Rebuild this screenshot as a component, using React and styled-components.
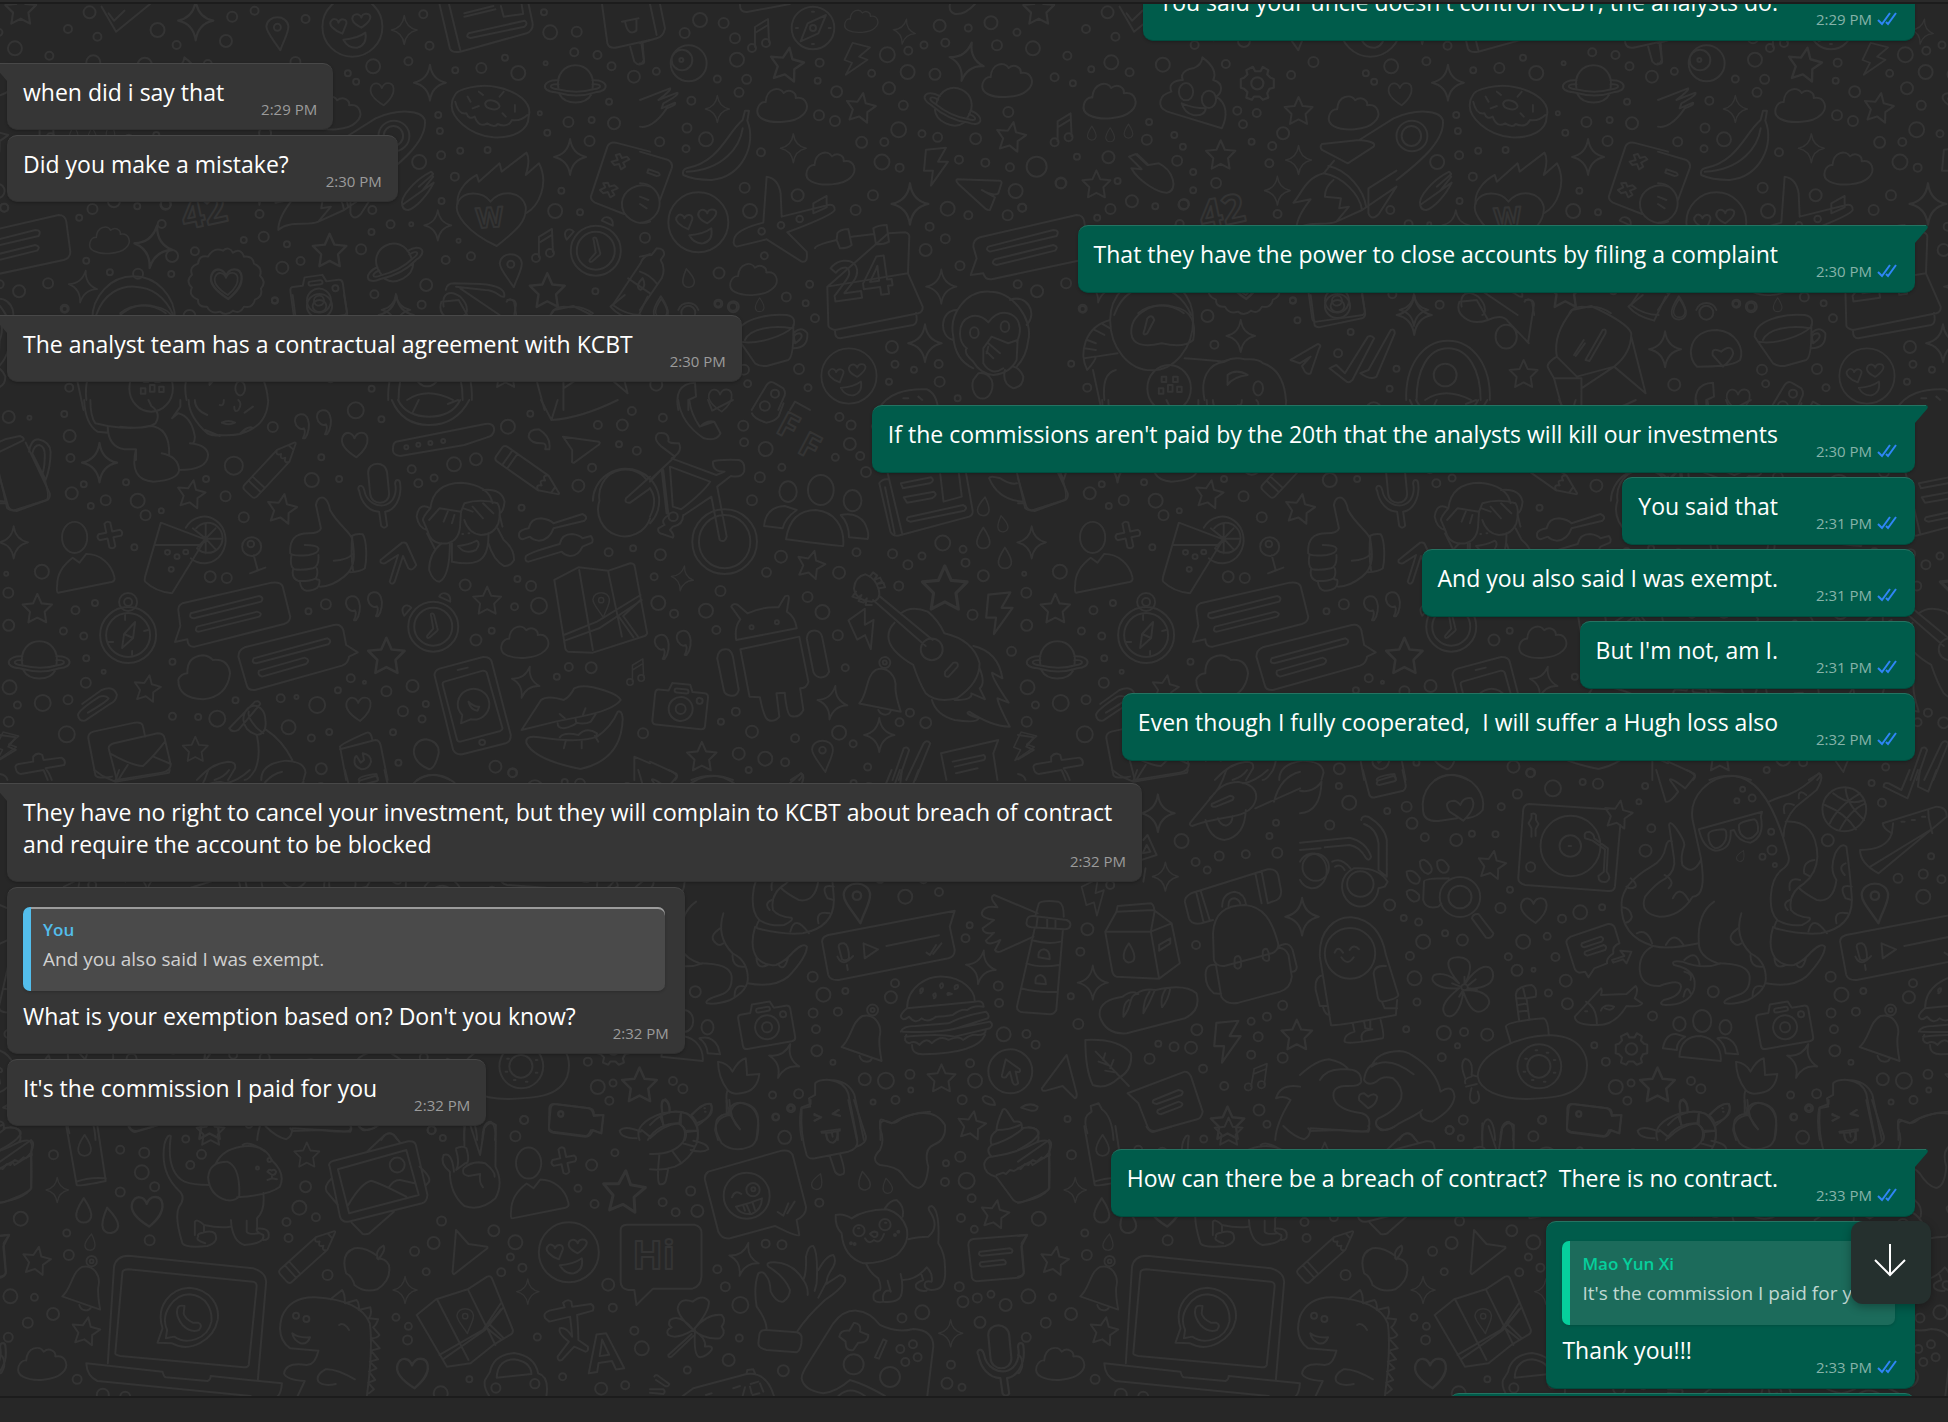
import React, { useLayoutEffect, useRef } from 'react';
import styled, { createGlobalStyle, css } from 'styled-components';

const GlobalStyle = createGlobalStyle`
  * {
    box-sizing: border-box;
  }

  body {
    margin: 0;
    background: #272727;
    color: #ffffff;
    font-family: "Open Sans", "Noto Sans", sans-serif;
  }
`;

const Page = styled.div`
  display: flex;
  flex-direction: column;
  height: 100vh;
`;

const TopEdge = styled.header`
  flex: none;
  height: 4px;
  background: #2a2a2a;
  border-bottom: 2px solid #1c1c1c;
`;

const BottomEdge = styled.footer`
  flex: none;
  height: 26px;
  background: #272727;
  border-top: 2px solid #1c1c1c;
`;

const Chat = styled.main`
  position: relative;
  flex: 1;
  min-height: 0;
  background: #272727;
`;

const Wallpaper = styled.svg`
  position: absolute;
  inset: 0;
  width: 100%;
  height: 100%;
  fill: none;
  stroke: #343434;
  stroke-width: 2;
  stroke-linecap: round;
  stroke-linejoin: round;
`;

const Scroller = styled.div`
  position: relative;
  height: 100%;
  overflow-y: scroll;
  scrollbar-width: none;
`;

const Messages = styled.div`
  display: flex;
  flex-direction: column;
  gap: 22px;
  padding: 0 33px 0 7px;
`;

const Group = styled.div`
  display: flex;
  flex-direction: column;
  align-items: ${props => (props.$mine ? 'flex-end' : 'flex-start')};
  gap: ${props => (props.$mine ? 4 : 5)}px;
  padding-bottom: ${props => (props.$mine ? 0 : 1)}px;
`;

const Bubble = styled.article`
  position: relative;
  display: flex;
  flex-direction: column;
  max-width: 1135px;
  min-width: ${props => props.$minWidth || 0}px;
  min-height: 67px;
  padding: 12px 16px 10px;
  border: 1px solid transparent;
  border-left: 0;
  border-right: 0;
  border-radius: 10px;
  background: #363636;
  border-top-color: #484848;
  border-bottom-color: #303030;
  box-shadow: 0 1px 3px rgba(0, 0, 0, 0.25);

  ${props => props.$mine && css`
    min-height: 68px;
    padding-bottom: 11px;
    background: #005c4b;
    border-top-color: #257362;
    border-bottom-color: #004c3e;
  `}

  ${props => props.$tail && (props.$mine
    ? css`border-top-right-radius: 0;`
    : css`border-top-left-radius: 0;`)}
`;

const Tail = styled.svg`
  position: absolute;
  top: -1px;
  width: 13px;
  height: 18px;
  fill: #363636;
  stroke: #484848;

  ${props => (props.$mine ? css`
    left: 100%;
    fill: #005c4b;
    stroke: #257362;
  ` : css`
    right: 100%;
    transform: scaleX(-1);
  `)}
`;

const Body = styled.div`
  display: grid;

  > * {
    grid-area: 1 / 1;
  }
`;

/* the trailing block keeps the last line clear of the time stamp */
const Text = styled.p`
  margin: 0 0 11px;
  font-size: 23px;
  line-height: 32px;
  white-space: pre-wrap;

  &::after {
    content: '';
    display: inline-block;
    width: ${props => (props.$mine ? 121 : 93)}px;
  }
`;

const Meta = styled.div`
  display: flex;
  align-items: center;
  align-self: end;
  justify-self: end;
  gap: 5px;
  padding-right: ${props => (props.$mine ? 2 : 0)}px;
  color: ${props => (props.$mine ? '#86b3a9' : '#9b9b9b')};
  font-size: 15px;
  line-height: 20px;
`;

const Ticks = styled.svg`
  width: 20px;
  height: 14px;
  fill: none;
  stroke: #2f86f6;
  stroke-width: 2;
`;

const Quote = styled.blockquote`
  height: 84px;
  margin: 7px 4px 9px 0;
  padding: 11px 20px 0 12px;
  border-left: 8px solid #53bdeb;
  border-radius: 7px;
  background: #4a4a4a;
  box-shadow: inset 0 2px 0 #9c9c9c, 0 1px 3px rgba(0, 0, 0, 0.2);

  ${props => props.$mine && css`
    border-left-color: #06cf9c;
    background: #1c6b5b;
    box-shadow: 0 1px 3px rgba(0, 0, 0, 0.15);
  `}
`;

const QuoteName = styled.div`
  color: ${props => (props.$mine ? '#06cf9c' : '#53bdeb')};
  font-size: 17px;
  font-weight: 600;
  line-height: 24px;
`;

const QuoteText = styled.div`
  margin-top: 3px;
  color: ${props => (props.$mine ? '#c0d8d2' : '#d0d0d0')};
  font-size: 19px;
  line-height: 28px;
`;

const JumpButton = styled.button`
  position: absolute;
  right: 17px;
  bottom: 92px;
  display: flex;
  align-items: center;
  justify-content: center;
  width: 80px;
  height: 83px;
  padding: 0 2px 5px 0;
  border: 0;
  border-radius: 12px;
  background: #25302e;
  box-shadow: 0 3px 10px rgba(0, 0, 0, 0.3);
`;

const Arrow = styled.svg`
  width: 32px;
  height: 34px;
  fill: none;
  stroke: #ffffff;
  stroke-width: 2;
`;

const groups = [
  { mine: true, messages: [
    { text: "You said your uncle doesn't control KCBT, the analysts do.", time: '2:29 PM', follows: true }
  ] },
  { messages: [
    { text: 'when did i say that', time: '2:29 PM' },
    { text: 'Did you make a mistake?', time: '2:30 PM' }
  ] },
  { mine: true, messages: [
    { text: 'That they have the power to close accounts by filing a complaint', time: '2:30 PM' }
  ] },
  { messages: [
    { text: 'The analyst team has a contractual agreement with KCBT', time: '2:30 PM' }
  ] },
  { mine: true, messages: [
    { text: "If the commissions aren't paid by the 20th that the analysts will kill our investments", time: '2:30 PM' },
    { text: 'You said that', time: '2:31 PM' },
    { text: 'And you also said I was exempt.', time: '2:31 PM' },
    { text: "But I'm not, am I.", time: '2:31 PM' },
    { text: 'Even though I fully cooperated,  I will suffer a Hugh loss also', time: '2:32 PM' }
  ] },
  { messages: [
    { text: 'They have no right to cancel your investment, but they will complain to KCBT about breach of contract and require the account to be blocked', time: '2:32 PM' },
    {
      quote: { name: 'You', text: 'And you also said I was exempt.' },
      text: "What is your exemption based on? Don't you know?",
      time: '2:32 PM'
    },
    { text: "It's the commission I paid for you", time: '2:32 PM' }
  ] },
  { mine: true, messages: [
    { text: 'How can there be a breach of contract?  There is no contract.', time: '2:33 PM' },
    {
      quote: { name: 'Mao Yun Xi', text: "It's the commission I paid for you" },
      text: 'Thank you!!!',
      time: '2:33 PM'
    },
    { minWidth: 466 }
  ] }
];

/* Small doodles that come back all over the wallpaper, drawn round 0,0. */
const stamps = {
  star: <path d="M0-14L4-5 14-4 7 3 8.5 13 0 8.5-8.5 13-7 3-14-4-4-5Z" />,
  sparkle: <path d="M0-18Q2-3 16 0Q2 3 0 18Q-2 3-16 0Q-2-3 0-18Z" />,
  cloud: <path d="M-20 13C-30 8-24-5-17-4C-16-18-3-20 1-13C7-18 14-13 13-8C24-10 28 2 20 9C12 17-10 18-20 13Z" />,
  heart: <path d="M2 13C-6 8-15 1-12-7C-9-14-2-12 0-6C3-14 12-13 13-6C14 2 8 8 2 13Z" />,
  drop: <path d="M0-12C6-3 8 2 7 6C5 13-5 13-7 6C-8 2-6-3 0-12Z" />,
  pin: <g><path d="M3 18C-5 6-11 0-11-6C-10-18 10-18 11-6C11 2 6 8 3 18Z" /><circle cy="-5" r="3.5" /></g>,
  note: <g><path d="M-5 12V-8L8-16L9 7M-5-2L8-10" /><circle cx="-8" cy="13" r="4" /><circle cx="6" cy="8" r="4" /></g>,
  bolt: <path d="M-9-17L11-19L3-5H13L-4 19L-2 4H-11Z" />,
  quotes: <g>
    <path d="M-11 13C-7 8-6-1-8-6C-11-14-21-12-21-4C-20 2-15 5-12 3C-10 6-11 9-13 13Z" />
    <path d="M11 9C15 4 16-5 14-10C11-18 1-16 1-8C2-2 7 1 10-1C12 2 11 5 9 9Z" />
  </g>,
  planet: <g>
    <path d="M-17 6C-20-10-10-18 0-18S20-10 17 6" />
    <path d="M-17-3C-33-4-36 8-20 9C-6 13 8 13 20 9C35 8 33-4 17-3M-17 1C-26 0-28 5-18 6C-6 9 8 9 18 6C28 5 26 0 17 1M-16 11C-10 22 10 22 16 11" />
  </g>,
  camera: <g>
    <path d="M-24-13H-14L-11-21H7L10-14H22Q26-14 26-10V18Q26 22 22 22H-23Q-27 22-27 18V-9Q-27-13-24-13ZM-6-16H4Q6-16 6-13.500Q6-12 4-12H-6Q-8-12-8-14Q-8-16-6-16Z" />
    <circle cy="4" r="12" /><circle cy="4" r="5" /><circle cx="18" cy="-6" r="3" />
  </g>,
  bell: <g>
    <path d="M-24 12C-14 4-14-14-3-19C9-22 17-10 14 2C13 10 15 20 16 26ZM-6 21C-4 28 4 28 6 24" />
    <circle cx="7" cy="-25" r="5.500" /><circle cx="7" cy="-25" r="2" />
  </g>,
  pencil: <path d="M-9 32V-18L-1-36Q0-38 1-36L9-18V32Q9 36 5 36H-5Q-9 36-9 32ZM-9 20H9M-9 26H9M-9-18Q-6-12-3-18Q0-12 3-18Q6-12 9-18M-3-30H3" />,
  clock: <g>
    <circle r="25" /><circle r="19" />
    <path d="M-2-13Q-3-13-2-10L0 2L-6 9Q-7 12-4 11L4 4Q5 3 4 1L1-11Q0-14-2-13Z" />
    <path d="M-29-11C-34-20-27-24-22-19ZM6-30C8-36 18-34 17-25Z" />
  </g>,
  emoji: <g>
    <circle r="30" />
    <path d="M-10 7C-18 4-25-2-21-6C-18-10-14-6-14-4C-12-9-5-8-6-3ZM9 1C1-3-2-7 1-11C4-14 8-12 9-9C10-14 17-14 18-10C18-5 13-2 9 1ZM-9 13Q5 12 13 6Q15 18 5 21Q-4 22-9 13Z" />
  </g>,
  person: <g>
    <ellipse cy="-25" rx="13" ry="16" />
    <path d="M-17 32Q-19 32-18 24C-18 10-10 2-2-4L5 1L12-8C26-8 38 2 41 16Q42 20 38 21Z" />
  </g>,
  plus: <path d="M-3-12Q0-15 3-12V-3H11Q14 0 11 3H3V12Q0 15-3 12V3H-11Q-14 0-11-3H-3Z" />,
  gear: <g>
    <circle r="5.500" />
    <path d="M-4-15L-2-11H3L5-15L10-12L9-8L12-5L15-4V4L11 5L9 9L10 13L5 15L2 12H-3L-5 15L-10 13L-9 8L-12 5L-15 4V-4L-12-5L-9-8L-10-12Z" />
  </g>,
  compass: <g>
    <circle r="28" /><circle r="22" /><circle cy="-33" r="9" /><circle cy="-33" r="4" />
    <path d="M-6 13L-4 -1L7-13L5 3ZM-4-1L5 3M-3-20V-15M4 16V20M-20 7H-15M16-4L20-5" />
  </g>,
  burst: <path d="M-3-31Q3-36 7-29Q15-34 18-25Q27-26 28-18Q37-14 34-6Q41 0 35 7Q37 15 29 18Q27 27 18 25Q14 33 7 29Q0 35-6 30Q-15 33-19 25Q-28 26-28 18Q-38 14-34 6Q-41-1-34-7Q-37-15-28-18Q-27-27-18-25Q-12-35-3-31Z" />,
  mic: <path d="M-10-24C-10-36 8-36 9-24L11-3C11 9-7 9-8-3ZM-19-6C-22-10-16-14-14-7C-12 6 0 11 8 8C16 5 19-5 17-13C17-18 22-18 22-13C24 2 16 14 7 15L9 29Q6 33 3 29L1 15C-9 15-17 6-19-6Z" />
};

/*
 * The wallpaper is one tile, repeated sideways. Each patch of it has its own
 * origin and unit; dots are "x,y,radius", items are [stamp, x, y, size, turn].
 */
const TILE_WIDTH = 1018;

const patches = [
  {
    origin: [0, -4],
    unit: [0.4146, 0.3333],
    dots: '216,37,6 164,87,4 380,90,7 560,50,5 614,32,4 235,110,4 36,145,7 119,167,4 426,135,4 545,123,6 737,57,4 1021,43,4 1036,137,4 985,184,4 900,199,7 839,220,3 859,245,3 1098,211,3 1161,204,5 1218,173,3 1250,219,7 1312,37,3 1327,97,7 1391,95,5 1385,157,4 1441,165,4 1475,199,4 1316,190,2 1529,230,6 1469,305,3 1302,340,2 1371,366,5 1427,360,3 1320,398,3 1481,370,6 1057,345,3 1061,393,3 1110,452,3 1176,450,3 1064,466,4 1011,486,7 1097,530,4 1422,423,5 1354,572,3 1339,633,7 1399,637,3 1065,603,3 626,642,4 898,630,4 942,673,4 992,673,2 896,696,3 1106,722,2 1136,769,4 1075,780,4 636,710,5 588,720,3 692,733,3 725,783,4 871,748,5 681,803,6 470,754,4 390,672,4 223,627,5 191,653,3 331,619,3 399,614,5 10,623,4 208,782,3 265,817,3 333,821,5 415,768,6 413,822,3 116,850,5 46,874,6 156,926,4 663,902,3 903,883,4 1028,855,6 1017,914,4 1436,874,3',
    items: [
      ['star', 50, 28, 1.1], ['star', 795, 752, 1.2], ['star', 1320, 872, 1.25],
      ['sparkle', 472, 62, 1.1], ['sparkle', 975, 90, 0.8], ['sparkle', 1037, 248, 1], ['sparkle', 1375, 471, 1],
      ['sparkle', 370, 740, 1.2, 10], ['sparkle', 1056, 676, 0.85], ['sparkle', 200, 860, 0.9, 10], ['sparkle', 955, 930, 0.9],
      ['pin', 669, 97, 1], ['pin', 1232, 808, 1], ['heart', 921, 281, 0.9], ['planet', 1388, 250, 1], ['planet', 950, 785, 1, -28],
      ['emoji', 850, 80, 1], ['burst', 545, 845, 1], ['heart', 545, 850, 1.2], ['heart', 545, 850, 0.9],
      ['cloud', 265, 722, 0.8], ['camera', 768, 890, 1, -8], ['note', 1312, 735, 1], ['clock', 1437, 752, 1]
    ],
    lines: [
      'M245 20L280 95L362 12M262 40L275 62L300 32',
      'M1060 12L1085 145Q1090 160 1110 155L1270 100Q1290 90 1283 60L1275 12M1083 12L1110 150M1120 40L1190 18M1120 50L1195 28M1208 18L1215 50L1262 42L1258 12M1130 100L1265 62Q1275 70 1265 80L1135 114Q1122 112 1130 100Z',
      'M1452 12L1465 130Q1470 148 1490 142L1568 120M1520 140L1530 185Q1545 205 1553 180L1550 130M1500 65L1540 55M1508 68Q1515 110 1535 92V58',
      'M1095 290C1100 265 1160 250 1200 262C1250 275 1285 310 1275 350C1275 390 1240 415 1190 412C1130 405 1085 350 1090 310Q1090 300 1095 290ZM1098 305Q1105 345 1125 340Q1130 360 1145 350Q1155 385 1175 370Q1195 385 1200 372Q1225 385 1235 360Q1255 365 1272 345',
      'M1170 310C1175 295 1200 300 1205 318C1205 335 1170 330 1170 310ZM1128 290L1135 305M1155 275L1165 285M1215 275L1205 290M1242 315V335M1140 325L1155 318M1220 350L1212 340',
      'M1104 612C1100 580 1120 545 1150 525L1155 545L1205 490L1210 515L1270 458C1280 480 1272 510 1268 525L1300 490C1325 550 1300 620 1268 640',
      'M1198 738C1130 700 1090 640 1105 605C1120 570 1165 575 1183 605C1210 565 1260 575 1268 620C1272 670 1235 700 1198 738Z',
      'M970 615C965 590 1000 540 1040 515L1045 522L1010 560M1045 530L1020 570M1046 548C1030 590 1000 625 985 630Q972 630 970 615Z',
      'M1568 455L1485 428Q1470 425 1465 440L1425 590Q1425 600 1435 608L1505 642M1500 608A50 58 0 0 1 1568 560M1500 608A50 58 0 0 0 1568 665M1485 465L1490 480L1475 485L1482 495L1493 492L1498 508L1508 500L1503 488L1518 478L1512 470L1500 474L1495 462ZM1455 550L1460 562L1447 570L1455 580L1466 576L1472 592L1482 585L1476 572L1490 565L1482 556L1470 560L1466 548Z',
      'M232 945C250 880 290 858 325 860C370 862 400 895 418 945M290 940C320 908 370 910 400 940',
      'M1070 920C1065 880 1085 868 1110 890C1135 920 1125 945 1120 945M1075 870Q1078 850 1095 850L1160 852C1200 855 1220 870 1216 890C1205 895 1200 870 1170 870L1100 860M1222 905Q1230 890 1240 905L1245 945M1110 865L1205 945',
      'M1568 762Q1550 770 1545 790L1478 915Q1510 945 1545 945M1515 835L1568 880M1550 835Q1530 860 1545 870Q1560 860 1550 835M1330 940Q1340 915 1375 922Q1400 915 1430 940'
    ],
    words: [['42', 445, 690, 40, -12], ['W', 1150, 685, 28, -4]]
  },
  {
    origin: [32, -4],
    unit: [0.5727, 0.3333],
    dots: '8,232,4 40,250,3 72,208,3 107,187,7 139,217,4 197,194,7 307,192,4 460,186,5 421,225,4 173,366,3 169,419,5 217,405,3 232,440,3 327,332,4 361,339,4 337,373,4 407,400,6 352,425,3 388,438,4 383,490,4 47,470,3 102,472,6 222,482,5 250,516,3 250,571,3 290,549,5 19,550,5 118,543,3 143,604,6 234,612,5 57,927,3 275,948,6 424,901,3 432,961,3 287,1034,4 503,1060,4 525,996,3 605,1106,3 593,1166,3 37,1091,3 65,1163,4 1090,1154,6 1146,938,7 1198,911,3 1224,920,4',
    items: [
      ['cloud', 105, 305, 1.05], ['cloud', 531, 340, 1], ['gear', 362, 250, 1.1], ['star', 434, 333, 1], ['star', 298, 465, 1.05], ['star', 81, 553, 1],
      ['star', 827, 1122, 1], ['sparkle', 434, 480, 0.8], ['sparkle', 397, 572, 0.8], ['sparkle', 636, 945, 1.1], ['sparkle', 333, 1008, 0.9],
      ['sparkle', 1074, 1048, 1], ['drop', 73, 400, 0.6], ['drop', 105, 405, 0.6], ['drop', 137, 394, 0.6], ['drop', 1098, 925, 1],
      ['note', 22, 388, 1]
    ],
    lines: [
      'M300 385L205 335C185 320 190 285 212 275C205 250 220 240 232 240C225 215 245 205 250 205Q265 195 266 172C280 190 292 215 285 240C305 250 300 280 290 290C310 310 310 350 300 385ZM225 275A12 25 0 1 0 250 275A12 25 0 1 0 225 275M265 298A12 25 0 1 0 290 298A12 25 0 1 0 265 298M230 310Q250 325 272 325Q270 350 250 345Q235 340 230 310',
      'M540 420L600 355C640 325 680 330 686 360C690 420 650 480 605 540M540 420L475 432Q470 440 475 450L520 490L565 440Q572 425 540 420M605 408A27 46 0 1 0 659 408A27 46 0 1 0 605 408M614 408A17 30 0 1 0 648 408A17 30 0 1 0 614 408',
      'M496 482L478 520C510 530 540 580 545 630L605 560L575 640Q562 665 556 640V565L605 512M486 498C520 510 548 570 552 620',
      'M478 520C445 535 440 580 425 608L455 598C440 630 430 660 430 690C450 660 480 680 500 665L522 620L505 625L508 595L480 590Q480 560 495 540M500 665L545 630',
      'M138 470L150 462L170 495L150 463M138 470L160 508L142 505C155 545 190 580 205 578C225 570 215 510 190 490L172 495L152 462',
      'M105 960A72 130 0 0 1 250 960A72 150 0 0 1 105 960ZM142 1000C140 940 180 905 215 920C250 930 255 975 250 1020Q235 1045 195 1030Q145 1050 142 1000ZM165 990Q160 1010 170 1000L182 960Q178 940 170 955Z',
      'M105 960C60 980 50 1060 65 1110Q80 1080 80 1070L118 1060M90 970L105 985M78 990L95 1005M65 1020L80 1030M60 1045L80 1050M60 1075L78 1070M235 1075C290 1080 300 1090 310 1080M75 1110L90 1230M115 1110Q90 1120 95 1200M170 1165A38 70 0 1 0 246 1165A38 70 0 1 0 170 1165',
      'M195 1130h8v16h-8zM215 1130h8v16h-8zM190 1165h8v16h-8zM222 1160h8v16h-8zM206 1155h8v20h-8z',
      'M270 1200C262 1140 275 1090 305 1085Q320 1070 340 1078Q365 1075 372 1090Q408 1110 412 1200M310 1125Q325 1105 345 1125Q320 1130 310 1155ZM355 1165A8 20 0 1 0 372 1165A8 20 0 1 0 355 1165',
      'M622 1200C620 1100 650 1022 695 1022S770 1100 768 1200M640 1200C640 1110 660 1045 695 1045S752 1110 752 1200M670 1125A20 34 0 1 0 710 1125A20 34 0 1 0 670 1125M655 1200Q690 1160 735 1200',
      'M420 1080L468 1032Q475 1035 470 1045L455 1120Q450 1125 445 1115L440 1098L455 1070L436 1090ZM488 1105L500 1095L515 1120L555 1010Q562 1005 566 1015L528 1140Q522 1150 518 1145ZM542 1120L556 1110L595 990Q602 985 602 1000L570 1130Q560 1142 542 1120',
      'M715 905Q708 935 725 955Q740 975 765 960L745 900ZM765 960Q790 940 800 965L836 1030M778 1010A18 35 0 1 0 815 1010A18 35 0 1 0 778 1010M830 900Q845 895 845 915L835 1025',
      'M912 930L945 918Q1010 970 1015 1000Q1015 1060 985 1100L920 1130L885 1070C880 1020 890 980 912 930ZM885 1070Q865 1090 870 1105L880 1135H928V1230M880 1135L895 1230M1015 1010L1040 1180L985 1100L928 1165M935 1080L965 990Q972 985 970 1000L942 1083ZM915 1065L932 1020M918 1068L934 1030',
      'M1130 1100C1110 1070 1115 990 1165 990C1200 995 1212 1050 1205 1080C1190 1100 1160 1100 1130 1100ZM1175 1100L1157 1065Q1155 1040 1172 1055Q1190 1030 1193 1060Q1190 1080 1175 1100ZM1035 885L1010 920Q1025 950 1055 962L1075 890',
      'M455 885L462 975Q465 985 475 980L545 955Q552 950 550 935L545 885M480 918A22 36 0 1 0 524 918A22 36 0 1 0 480 918M490 918A12 18 0 1 0 514 918A12 18 0 1 0 490 918'
    ],
    words: []
  },
  {
    origin: [640, -4],
    unit: [0.3333, 0.3333],
    dots: '180,60,7 251,69,5 134,99,5 285,115,5 291,179,7 49,214,3.5 232,237,3.5 320,238,4.5 297,277,4.5 154,302,4 141,384,4.5 59,425,4.5 198,418,7 138,446,3.5 363,457,4 539,188,4 533,242,3 590,275,5.5 537,346,5 585,363,5 742,164,7.5 695,220,3.5 747,265,6 790,316,4.5 803,216,7 805,152,4 852,135,3.5 885,223,5.5 899,77,6 916,128,4 985,84,3.5 1053,68,6.5 1071,136,5 1131,97,3.5 1105,336,5 1007,416,5.5 893,412,4.5 846,401,3.5 776,389,7.5 733,426,4 665,427,5.5 726,486,7.5 779,503,4 957,479,4 1036,488,4 1110,502,4 1190,500,10 1263,549,5.5 1127,573,7 1147,623,4 1103,646,5 985,646,4 923,626,7 869,680,4 916,716,4.5 857,750,6 960,797,4.5 699,586,5 647,630,5 473,586,6 314,563,5 330,633,7 373,767,3.5 237,819,5.5 439,891,4.5 509,853,3.5 497,910,3 525,955,4 280,920,5.5 235,911,4 15,713,5 1133,853,4 756,1041,6 765,1093,3.5 822,1109,3 896,1092,4 899,1145,5 747,1145,3 477,1107,5 504,1163,3.5 312,1109,5 323,1151,3.5 953,1195,3',
    items: [
      ['note', 360, 105, 1], ['star', 440, 193, 1.2, 10], ['star', 662, 323, 1.05, 10], ['star', 1113, 410, 1.05, 10], ['sparkle', 793, 95, 0.7, 10],
      ['sparkle', 980, 185, 1.1, 15], ['sparkle', 232, 327, 0.75], ['sparkle', 460, 445, 0.8], ['sparkle', 810, 612, 1.15], ['sparkle', 904, 860, 0.95],
      ['sparkle', 855, 1030, 1.05], ['cloud', 428, 318, 1], ['cloud', 665, 65, 0.67], ['cloud', 573, 507, 0.97], ['cloud', 342, 840, 0.94],
      ['cloud', 1103, 243, 1], ['bolt', 645, 180, 0.9, 20], ['bolt', 885, 500, 1], ['planet', 942, 318, 1, 25], ['emoji', 175, 667, 1],
      ['emoji', 627, 1128, 0.92], ['heart', 240, 1200, 0.9], ['drop', 144, 835, 0.8, -10], ['drop', 359, 915, 0.6], ['drop', 64, 925, 0.8]
    ],
    lines: [
      'M30 12L50 105M60 12L75 85Q70 110 50 115L0 130M0 190Q15 195 12 180L5 135',
      'M455 84A64 64 0 1 0 583 84A64 64 0 1 0 455 84M558 45L535 100L482 124L503 70ZM510 84A9 9 0 1 0 528 84A9 9 0 1 0 510 84M516 35h6M516 132h6M468 84h6M566 84h6',
      'M92 190A54 54 0 1 0 200 190A54 54 0 1 0 92 190M95 180A31 31 0 1 0 157 180A31 31 0 1 0 95 180M118 180A6 6 0 1 0 130 180A6 6 0 1 0 118 180',
      'M300 12Q298 40 325 35L450 12M930 12Q925 35 945 42Q975 45 1005 12M0 300L90 265Q95 270 55 300L112 278Q118 285 70 310L65 325L105 308Q110 315 80 325C50 370 20 385 0 380',
      'M308 360L315 332H327L322 362C350 430 310 530 215 540Q160 540 130 525Q125 510 140 505C240 485 260 400 308 360ZM308 385C300 440 250 510 140 515',
      'M380 530Q415 535 422 580L425 650L565 615Q585 612 584 630Q580 645 442 697L500 755Q505 790 485 785L380 718L290 740Q275 735 285 710Q300 685 370 668ZM520 640V610L560 588V622ZM355 694A10 10 0 1 0 375 694A10 10 0 1 0 355 694M413 676A10 10 0 1 0 433 676A10 10 0 1 0 413 676M469 657A10 10 0 1 0 489 657A10 10 0 1 0 469 657',
      'M525 745Q525 735 590 720L592 700Q600 688 625 687L635 735Q625 745 600 745L590 720M635 710L703 702L700 685Q715 675 740 675L747 725Q735 733 708 733L703 702M745 700L795 697Q808 700 808 710L804 820L848 920Q850 935 835 940L585 990Q565 985 565 975L562 860ZM562 860L804 820M585 992Q585 1015 600 1015L820 975Q835 970 828 940',
      'M290 1010C290 960 380 940 440 945Q470 950 460 980C430 1010 350 1035 300 1025ZM300 1025L345 1090Q360 1100 380 1098L445 1080Q462 1070 460 975M315 1020C330 985 400 975 455 985M460 1000Q485 975 502 1000Q505 1045 460 1045M465 1025Q455 1000 480 1000Q495 1010 465 1030Z',
      'M940 1010C925 940 980 870 1050 875C1120 875 1180 960 1165 1020Q1160 1070 1130 1100M940 1010Q945 1080 1000 1105M950 930C900 930 895 1010 940 1020M1110 900C1160 880 1195 940 1160 975M1045 967C1010 930 960 950 960 1000Q960 1030 980 1045M1045 967C1080 920 1135 935 1140 985Q1140 1010 1130 1025M990 998A13 16 0 1 0 1016 998A13 16 0 1 0 990 998M1082 980A13 16 0 1 0 1108 980A13 16 0 1 0 1082 980',
      'M980 1045Q970 1060 1000 1085Q1020 1120 1060 1125Q1110 1120 1130 1080L1133 1020L1105 1030L1055 1010L1030 1045V1090Q1055 1130 1090 1105M1045 1030L1080 1060M1040 1055L1060 1075M1040 1060L1045 1040M1000 1140A30 40 0 1 0 1055 1140Q1040 1115 1015 1120ZM1095 1110Q1085 1150 1120 1165Q1150 1160 1150 1130Q1140 1105 1120 1100',
      'M952 538L1080 542Q1088 545 1083 555L1075 580Q1060 590 1025 570L1065 592L1050 630Q1045 632 1035 625L955 552Q945 540 952 538Z',
      'M1000 740Q1000 718 1020 712L1310 645Q1330 645 1333 665L1345 755Q1345 775 1325 780L1055 838Q1035 840 1030 820L992 825L1010 775ZM1045 740L1240 690Q1260 690 1250 708L1050 755Q1035 750 1045 740ZM1065 778L1240 735Q1258 740 1245 752L1070 795Q1050 790 1065 778Z',
      'M0 455L85 480Q100 490 95 505L60 600M25 508L55 518Q65 528 50 528L22 518ZM0 550A58 58 0 0 1 0 668M0 590L25 600M0 612L20 625M0 770Q20 765 35 765L50 745Q75 745 72 765L62 780Q78 805 65 835L0 930M0 815Q30 825 50 850',
      'M115 930A32 32 0 0 1 175 930M115 1230C105 1180 120 1150 165 1148L168 1190L145 1200V1230M335 1230L380 1155Q390 1140 405 1150L430 1165Q440 1180 430 1195L415 1230M393 1181A12 12 0 1 0 417 1181A12 12 0 1 0 393 1181M450 1230L465 1205L510 1230M715 1230C740 1180 800 1165 860 1168Q890 1180 895 1230M790 1195h15M835 1190l12 10'
    ],
    words: [['24', 580, 905, 54, -8]]
  },
  {
    origin: [0, 396],
    unit: [0.4146, 0.3333],
    dots: '21,51,6 71,53,2 155,42,3 168,108,6 170,174,4 173,280,6 202,253,3 219,318,3 255,301,5 304,247,3 332,302,7 351,346,5 389,332,2.5 497,237,3 544,289,5 564,197,9 658,81,5 752,240,7 775,172,3 818,237,3 588,352,5 324,442,3 101,515,7 15,521,2 20,578,5 21,676,5.5 182,631,4 229,609,3 153,693,3.5 202,708,3.5 208,775,3 250,815,2 207,848,5 23,862,7 42,915,3.5 103,909,8 164,899,4.5 21,965,5 161,1003,8 416,785,3 416,949,3.5 478,951,3 507,530,5.5 547,534,5 568,901,3 524,956,8 677,895,4 715,891,2 765,915,8 696,982,7 794,996,3 751,1014,3.5 775,1106,5.5 744,634,3 786,613,5 846,835,4 879,847,1.5 815,871,3 932,874,5 995,858,6 972,934,5 1027,912,3 1018,957,3.5 948,997,3 961,1088,3 858,31,8 920,58,3 1225,80,7 1279,41,3 1095,193,7 1148,178,6 993,208,4 1009,250,4 1047,234,3.5 1258,323,3 1395,257,6 1428,203,4 1442,75,4 1501,75,5.5 1524,33,4 1493,133,3 1536,152,4 1468,457,4 1527,445,3 1122,555,5.5 1248,537,3 1281,558,5 1300,617,8 1241,620,3.5 1186,692,3 1148,720,5.5 1343,830,3 1372,801,4 1426,803,5.5 1195,1100,6 1236,1119,4 1551,1000,5 980,142,2 1009,134,2 1038,129,2 1069,123,2',
    items: [
      ['star', 90, 626, 1.05], ['star', 461, 282, 1, 10], ['star', 680, 326, 1.05, 10], ['star', 355, 865, 0.95, 10], ['star', 932, 768, 1.3],
      ['star', 1175, 602, 1], ['star', 471, 1048, 0.9], ['sparkle', 240, 188, 1.1], ['sparkle', 33, 427, 0.9], ['sparkle', 1268, 847, 0.9, 15],
      ['heart', 855, 133, 1], ['heart', 864, 926, 0.95], ['quotes', 762, 76, 1], ['quotes', 885, 622, 1], ['planet', 95, 778, 1],
      ['pencil', 655, 205, 0.95, 43], ['pencil', 1275, 218, 1, 125], ['cloud', 1267, 728, 0.95], ['note', 1535, 815, 0.8], ['pin', 1450, 612, 0.75],
      ['compass', 309, 705, 1], ['clock', 1045, 680, 1], ['person', 180, 485, 0.97], ['plus', 265, 405, 1, -12], ['mic', 912, 290, 1]
    ],
    lines: [
      'M0 155L55 122Q62 115 48 108L12 118L0 125M62 128L120 280Q122 298 110 302L40 333Q25 332 20 320L0 235M70 155Q75 118 92 118Q120 125 122 155Q122 200 110 240L78 160Q82 135 95 135Q108 140 108 165Q108 195 104 215M0 310H15',
      'M203 0Q205 70 235 95L260 98V78L230 70Q218 50 218 0M260 78Q260 140 300 148H328Q310 240 370 245Q430 240 432 210Q430 170 390 160M328 148V180M260 78Q320 90 360 78Q410 80 408 165M290 80Q350 90 375 70Q390 40 365 18L358 0M432 210Q500 210 502 165Q500 135 458 130Q470 135 470 110Q462 50 430 40L415 55L435 20V0',
      'M455 0Q455 50 500 100Q515 110 530 105Q580 110 610 85Q645 60 647 0M470 0Q470 30 500 45M495 90L530 108M535 68Q550 58 567 68Q550 78 535 68M565 20Q565 40 575 30Q585 10 575 0M530 15Q540 20 540 0M590 38L610 20M580 100Q600 75 610 85',
      'M945 0Q970 75 1035 75Q1100 75 1132 0M960 0Q980 50 1035 50Q1090 50 1110 0M995 38L1010 0M1080 12L1105 0',
      'M955 125L1170 72Q1192 68 1192 90Q1190 108 1175 112L1120 135L965 168Q945 165 948 145Q948 130 955 125ZM1305 0L1330 60Q1400 55 1490 0M1330 60L1345 0M1275 110Q1275 88 1300 88Q1330 110 1325 148L1315 148Q1320 128 1305 130Q1280 130 1275 110ZM1358 110L1445 125Q1450 130 1440 138L1385 188Q1378 190 1380 180V150Z',
      'M388 368L495 418L415 580Q375 575 350 545Q348 540 350 530ZM373 435H485M448 383A52 70 0 1 1 460 475M473 385A36 45 0 1 1 475 445M496 416L465 385M496 416V372M496 416L520 385M496 416H533M496 416L520 448M496 416V460M496 416L478 440M398 457A6 7 0 1 0 410 457A6 7 0 1 0 398 457M421 470A6 7 0 1 0 433 470A6 7 0 1 0 421 470M442 456A6 7 0 1 0 454 456A6 7 0 1 0 442 456M407 508A6 7 0 1 0 419 508A6 7 0 1 0 407 508',
      'M584 440A23 28 0 1 0 630 440A23 28 0 1 0 584 440M597 432A8 10 0 1 0 613 432A8 10 0 1 0 597 432M612 466L622 512M603 520L640 503',
      'M774 385L762 315Q765 290 780 293Q792 300 796 330C815 375 850 400 850 420C855 460 860 500 830 530Q800 560 772 560M774 385Q770 400 745 400C710 400 698 420 700 460Q705 470 745 465Q770 460 768 445Q765 435 735 435M703 465Q698 500 710 508Q730 512 755 505Q770 500 768 465M707 508Q702 535 720 543Q745 545 762 535Q768 520 764 505M723 543Q725 570 740 572Q775 570 770 540L762 537M805 482Q840 480 850 462M848 408Q860 400 875 403C885 420 885 480 880 505Q870 515 845 517M850 408Q845 460 852 515',
      'M918 480L970 428Q980 425 982 435L1004 495Q995 515 985 505L972 468L952 545Q945 558 940 545L960 465L928 490Q915 492 918 480Z',
      'M1038 325Q1045 250 1112 248Q1180 255 1188 310M1038 325Q1010 305 1005 350Q1010 385 1030 390M1165 270Q1210 265 1217 305Q1215 335 1205 340M1038 325Q1020 350 1020 360L1032 395Q1040 435 1080 430Q1110 420 1110 370L1112 335L1060 325L1035 360M1112 335L1120 310Q1160 295 1200 310Q1210 330 1202 370Q1190 405 1160 405Q1130 400 1120 360M1070 365L1080 335M1090 370L1096 345M1140 320L1165 355M1165 310L1190 340M1118 325L1140 335',
      'M1030 400L1048 445M1090 430V485Q1130 495 1150 485Q1180 470 1178 400M1105 438Q1130 435 1150 422Q1160 430 1148 450Q1120 465 1105 438ZM1065 430Q1035 460 1035 510Q1045 545 1060 545Q1085 530 1085 430M1200 385L1215 420Q1240 445 1240 480Q1230 500 1215 498Q1190 480 1178 430M1205 345L1212 380M1115 402h2M1130 400h2',
      'M1252 400Q1255 390 1275 385Q1280 355 1305 355Q1325 358 1335 370L1405 342Q1420 350 1410 362L1335 385Q1325 420 1300 422Q1285 420 1278 410L1260 418Q1250 415 1252 400ZM1268 470Q1270 460 1350 432Q1355 402 1380 402Q1398 405 1405 415L1425 408Q1432 418 1428 428L1405 440Q1395 468 1375 468Q1360 465 1355 455L1275 485Q1265 485 1268 470Z',
      'M430 630Q430 615 440 610L655 548Q678 545 682 560L700 650Q700 665 685 672L470 740Q452 742 452 718L422 726L435 678ZM460 640L625 588Q638 592 630 605L468 655Q455 655 460 640ZM475 680L620 635Q635 640 625 650L480 695Q468 695 475 680Z',
      'M575 770Q575 750 590 742L805 675Q822 670 828 690L835 735L863 757L842 770Q840 790 825 797L615 870Q598 872 595 855ZM612 775L790 715Q802 722 792 733L618 790Q605 788 612 775ZM625 812L735 773Q750 780 738 792L632 830Q620 825 625 812Z',
      'M452 820Q450 770 490 766Q505 768 513 780Q550 775 555 820Q548 890 490 898Q430 895 430 840Q435 822 452 820ZM198 912L245 870Q275 855 282 885Q280 905 265 912L205 962Q190 965 188 945Q190 930 240 890Q255 885 262 895Q258 905 212 938',
      'M213 1015Q212 1000 225 995L325 968Q343 965 345 980L350 1010M213 1015L230 1125Q235 1138 270 1130M262 1045Q262 1035 275 1030L380 1000Q395 1000 397 1015L412 1095Q410 1115 390 1118L282 1140ZM265 1060Q320 1098 345 1098Q370 1070 398 1025M285 1140L308 1095M370 1070L412 1092',
      'M38 1105Q35 1095 45 1092L80 1085V1070Q90 1055 102 1065L105 1080L148 1073Q160 1080 155 1095L110 1105Q120 1120 125 1140M38 1105Q40 1120 50 1122L105 1110L115 1140M0 1005L38 1012L20 1040L38 1050L0 1078M0 1122Q15 1125 18 1140',
      'M553 985L615 905Q625 900 628 912L575 990Q560 1000 553 985M587 960A26 42 0 0 1 640 960Q645 1000 620 1005Q590 995 587 960M600 935Q595 950 620 985L635 1000M620 1008Q630 1070 615 1110Q600 1140 590 1140M642 990Q680 1020 705 1080M475 1140Q510 1090 550 1085Q570 1085 567 1105L550 1140M630 1140Q630 1090 690 1082Q735 1085 737 1118L732 1140',
      'M820 1040Q825 1030 885 998Q895 995 898 1020M820 1040L835 1140M820 1048L905 1020Q915 1020 918 1035L935 1140M875 1060Q895 1065 895 1085Q890 1108 872 1108Q855 1100 855 1085Q855 1070 860 1068L870 1088L878 1080ZM865 1140Q865 1128 908 1122L912 1140',
      'M1028 1018Q1060 1025 1058 1060Q1050 1105 1035 1108Q1000 1090 998 1055Q1000 1020 1028 1018ZM1005 1140Q1040 1110 1085 1140M1530 1140L1530 1070L1568 1090',
      'M1048 825Q1048 812 1060 806L1165 771Q1182 770 1186 785L1232 1005Q1232 1025 1220 1030L1115 1063Q1100 1065 1093 1050ZM1068 855Q1066 848 1072 845L1165 812Q1172 812 1174 818L1212 985Q1212 990 1207 993L1110 1025Q1103 1025 1102 1018ZM1104 810L1128 803M1156 1027A7 8 0 1 0 1170 1027A7 8 0 1 0 1156 1027M1112 970L1115 945A38 46 0 1 1 1135 958ZM1130 905Q1135 930 1152 932L1156 920Q1145 922 1130 905Z',
      'M1258 990L1305 900Q1320 885 1360 900Q1375 890 1385 865Q1400 855 1430 862Q1490 880 1497 900Q1480 930 1400 950L1340 965ZM1270 1030Q1265 1005 1300 1012Q1400 1030 1440 1010Q1475 980 1490 935Q1500 930 1502 955Q1500 1080 1400 1107Q1290 1080 1270 1030ZM1345 970Q1345 985 1360 985Q1380 980 1390 970L1388 955M1390 968Q1410 975 1425 965L1437 942M1350 1012Q1360 995 1395 1005Q1415 980 1440 1000L1438 1010M1365 1020L1360 1045M1403 1022V1045M1435 1008L1443 1025M1412 925L1406 945M1350 942L1362 955',
      'M1337 540L1395 502L1468 512L1520 490Q1530 490 1531 500L1561 700Q1560 705 1555 708L1430 758L1370 755Q1365 752 1364 748ZM1397 510L1430 750M1467 515L1500 710M1360 705L1440 665L1545 585M1362 722L1445 685L1548 600M1490 645L1528 712M1545 600L1503 648L1540 712',
      'M1430 302A80 97 0 1 1 1568 370M1446 302A64 80 0 0 0 1568 355M1446 302A64 80 0 0 1 1560 240M1568 230L1510 295Q1505 310 1520 308L1568 265'
    ],
    words: []
  },
  {
    origin: [650, 396],
    unit: [0.4146, 0.3333],
    dots: '31,53,4 225,77,5 227,127,4 279,147,7 265,232,5 246,301,5 318,202,3.5 457,51,4 485,75,4.5 482,132,6 447,172,3.5 507,168,4 521,216,5 498,457,4 316,470,6 281,517,4.5 456,518,6 10,530,3.5 25,464,5.5 170,573,5 20,609,7 58,641,4 135,632,7 160,690,4 380,591,5 416,636,7 453,706,5 471,803,3.5 600,558,4.5 585,461,4.5 622,494,4.5 656,468,3.5 706,429,7.5 755,448,3.5 761,488,4 804,527,5.5 778,644,5 872,754,4.5 207,935,4 171,965,3 246,995,6 350,1015,4 456,998,7 490,1031,3.5 602,967,4 627,938,4 665,968,5.5 214,1061,6 278,1076,7 238,1110,3 326,1087,4 525,1101,3.5 245,682,2 306,667,2',
    items: [
      ['star', 711, 565, 1.6], ['star', 388, 493, 1, 15], ['star', 125, 1070, 1.05], ['sparkle', 78, 535, 0.7, 10], ['sparkle', 440, 908, 0.95, 10],
      ['sparkle', 553, 1005, 0.95], ['bolt', 518, 692, 1, -30], ['bolt', 840, 640, 1.1], ['bolt', 900, 1042, 0.8, 20], ['quotes', 62, 738, 1],
      ['camera', 75, 915, 1, 6], ['bell', 558, 865, 1, -8], ['pin', 416, 1065, 0.95], ['drop', 805, 320, 0.8, 8], ['drop', 850, 372, 0.7, -10],
      ['drop', 804, 415, 0.9], ['drop', 856, 475, 0.9]
    ],
    lines: [
      'M68 0Q75 70 130 115Q160 125 170 100L155 65L120 80Q98 40 95 0M155 65Q140 60 125 75M140 0L150 32L200 0',
      'M102 425A78 97 0 1 0 258 425A78 97 0 1 0 102 425M118 425A62 80 0 1 0 242 425A62 80 0 1 0 118 425M0 240L60 170L28 140Q5 115 20 100Q45 95 45 120Q40 130 70 130Q80 155 52 175L160 225L180 215Q150 215 152 185Q160 178 215 180Q230 185 227 215Q220 235 195 228L162 260L185 410Q180 430 168 420L148 290L82 345M48 200L145 245Q130 275 75 328L55 320ZM32 210L45 350M45 350A10 12 0 1 0 67 350A10 12 0 1 0 45 350M45 345Q25 360 35 375L20 385Q18 400 30 402L55 413Q60 405 48 390L55 380Q80 375 80 345M0 245L28 208L40 340M0 265Q20 300 0 350',
      'M312 275A21 31 0 1 0 354 275A21 31 0 1 0 312 275M381 270A31 45 0 1 0 443 270A31 45 0 1 0 381 270M467 302A21 31 0 1 0 510 302A21 31 0 1 0 467 302M328 418C335 360 360 330 400 330C445 335 470 380 466 438Q460 440 328 418ZM275 378Q280 320 325 318L354 330Q325 355 320 385ZM460 345Q500 335 518 370Q530 400 525 417L480 412Q480 370 460 345Z',
      'M573 218L608 400M553 250Q560 235 575 238M553 250L580 395Q588 412 605 405L770 350Q780 345 778 330L762 218M567 262L590 400M605 250L678 232Q688 242 675 250L610 265ZM612 292L685 275Q695 285 680 295L620 308ZM700 222L708 305L752 290L745 220M622 352L755 315Q768 322 758 332L628 365Q615 362 622 352Z',
      'M818 235Q820 225 845 235Q870 255 885 250M885 218L905 325Q915 335 925 330L1000 300Q1010 290 990 218M818 235Q840 300 900 305',
      'M208 720Q203 680 218 658L196 620Q200 608 212 615L235 640Q270 620 310 622L325 590Q335 582 335 595L330 635Q350 650 354 685ZM218 748L360 710L382 845Q378 865 362 865L370 930Q360 955 340 948Q330 945 325 878L305 880L312 950Q300 968 285 960Q275 955 265 892L240 890ZM162 775Q165 745 185 748Q195 748 200 770L214 870Q210 890 195 887Q180 885 178 870ZM378 715Q380 690 400 692Q412 695 415 710L432 815Q425 835 408 832Q395 828 393 810Z',
      'M538 600L665 738M555 590L682 720M653 748A26 32 0 1 0 706 748A26 32 0 1 0 653 748M492 565Q495 530 520 523Q545 535 552 570Q558 600 535 605Q495 600 492 565ZM530 530L538 517L548 527L540 540L555 533L560 545L548 552L563 548L567 562L553 565M497 575L488 590L500 595L510 585L503 603L515 608L523 595L520 615L535 615',
      'M605 640Q630 615 670 635Q695 660 710 700Q780 720 795 790Q795 850 740 895Q690 910 665 880Q650 850 635 795Q575 750 575 710Q575 685 590 668M712 815L732 788Q745 785 742 800L720 830Q708 832 712 815ZM780 738Q840 755 850 835L825 818Q825 835 865 908L838 895Q840 915 868 980Q825 980 770 935Q755 940 793 955Q790 970 735 960Q690 945 680 900M795 805Q810 850 795 865L808 898L775 880Q780 900 735 900',
      'M585 1140L612 1045Q620 1038 625 1050L600 1140M618 1140L660 1030Q668 1018 676 1030L640 1140M702 1060L840 1020L828 1060L838 1140M702 1060L715 1140M730 1085L805 1065Q812 1072 805 1080L735 1100M738 1120L790 1105M0 1085L62 1120Q70 1128 60 1140M100 1140Q150 1115 200 1140M340 1140L365 1120Q372 1125 360 1140',
      'M246 40Q250 55 280 68Q300 65 310 50L322 10M265 18A12 14 0 1 0 289 18A12 14 0 1 0 265 18M535 80Q545 40 570 30M535 80Q540 100 570 120'
    ],
    words: [['F', 300, 95, 34, 28], ['F', 352, 155, 34, 28]]
  },
  {
    origin: [282, 766],
    unit: [0.4133, 0.3333],
    dots: '119,98,7 94,48,3 211,123,3 258,110,5 271,160,5.5 72,165,4.5 302,202,4 378,210,6 416,191,3 473,193,3 487,110,3.5 526,72,4.5 612,55,8 684,36,3 721,41,5 558,8,4.5 835,48,3 820,95,2.5 850,175,4 836,242,6 508,359,3 485,414,5 217,405,5.5 251,444,3 287,456,3.5 298,515,7 351,490,3 393,510,5.5 266,558,4 277,625,7 283,696,3.5 257,778,3 348,789,7 397,786,4 453,794,6 381,827,2.5 343,862,4 540,515,7 598,499,3.5 504,560,3.5 525,601,5.5 565,599,2 618,561,4 678,427,7 731,412,3 634,446,4 643,632,6 601,669,3.5 647,701,5.5 712,826,3 740,875,4 764,951,7 801,939,3.5 792,992,4 946,933,4 970,956,4.5 853,738,4.5 1000,665,5.5 586,1050,4 395,1050,4.5 362,1080,4 1140,185,3 1142,240,4.5 1119,260,3 1149,285,2 1277,211,6 1284,620,5 1310,674,7 1285,729,4.5 1292,778,4 1294,842,5.5 1250,971,4.5 1187,975,3.5 1231,1015,2.5 1195,1041,3 1333,877,2.5 1383,39,3 1408,98,4 1447,325,4.5 1508,312,4.5 1552,328,4 1527,259,3 1508,380,7 1071,58,2.5 1094,84,3.5 1057,92,2.5 1345,725,4 1363,663,3',
    items: [
      ['star', 464, 284, 1, 10], ['star', 770, 133, 1, 10], ['star', 865, 945, 1.25], ['sparkle', 5, 440, 1.05], ['sparkle', 1215, 873, 1, 20],
      ['heart', 565, 420, 1], ['camera', 1172, 760, 1, -10], ['gear', 802, 837, 1.05], ['drop', 1067, 258, 0.5, 25], ['pin', 1391, 395, 1.2],
      ['bell', 1412, 795, 1]
    ],
    lines: [
      'M0 62A50 65 0 0 0 52 35M0 130Q50 125 52 35M152 0L168 75Q172 85 182 82L250 62Q258 55 255 40L248 0M188 32L225 18Q235 22 230 33L192 45Q182 45 188 32Z',
      'M298 125C290 60 325 15 370 14C420 18 450 75 442 120Q430 140 405 145M298 125Q300 155 335 153L380 145M395 152L362 125Q345 95 372 92Q380 92 388 105Q395 80 415 85Q430 110 395 152Z',
      'M540 120Q542 102 555 102L745 118M775 165L762 350Q760 365 745 363L545 345Q528 340 528 325L540 120M582 228A72 90 0 1 0 727 228A72 90 0 1 0 582 228M628 228A26 32 0 1 0 680 228A26 32 0 1 0 628 228M650 228h6M560 200V175L553 160L560 145V132Q567 128 571 135V150L577 162L570 178V198M547 291A11 14 0 1 0 569 291A11 14 0 1 0 547 291M690 205Q685 185 700 185Q712 192 712 205L745 235L742 305Q755 325 742 335Q722 340 722 318L735 305L738 238L708 212Z',
      'M0 218L120 203Q160 215 172 260Q168 275 160 265Q145 230 120 225L60 232M0 240L50 235M148 150Q150 135 165 140Q205 170 210 210V320L190 300V220Q185 175 155 162M0 275A35 52 0 1 1 0 330M6 292A30 38 0 1 0 70 292A30 38 0 1 0 6 292M78 275Q100 260 122 295M85 290Q100 280 108 300M102 342A42 58 0 1 0 190 355L205 350L212 335Q190 290 130 295Q105 310 102 342M114 342A32 38 0 1 0 178 342A32 38 0 1 0 114 342',
      'M290 275Q300 260 315 285Q325 305 310 312Q290 305 290 275ZM332 275Q345 258 360 290Q360 310 345 308Q330 300 332 275ZM258 305Q275 295 290 325Q290 345 275 340Q258 330 258 305ZM258 365Q270 350 288 375Q292 395 275 395Q258 385 258 365ZM300 335Q300 325 360 325M300 335L298 390Q305 420 335 410L342 400M338 381A49 60 0 1 0 436 381A49 60 0 1 0 338 381M359 381A28 34 0 1 0 415 381A28 34 0 1 0 359 381M416 445Q418 430 432 432L468 490Q465 508 450 503Z',
      'M75 765L48 560C45 480 85 440 125 442C180 450 200 500 208 555L238 675Q238 685 200 695Q190 695 188 680L178 610Q180 585 208 588M75 765Q85 770 232 735L235 690M60 550A60 75 0 1 0 182 550A60 75 0 1 0 60 550M55 615Q35 620 38 660L48 708H65M55 708Q60 735 72 735M198 695L205 715H235M84 548Q92 525 104 548M120 540Q130 520 143 538M100 562Q115 590 130 562M128 762L132 785Q105 795 108 815Q115 825 200 805Q205 800 195 750M155 755L158 775L170 778V752M150 810Q145 790 160 782L175 778',
      'M385 640C350 590 350 560 385 562C420 565 415 600 400 640C440 570 470 585 467 620C465 650 430 655 400 660C460 660 470 700 445 720C420 740 405 700 395 665C390 720 370 750 352 735C335 710 360 680 385 655C330 660 310 630 325 615C345 605 370 620 385 640ZM390 652A8 9 0 1 0 406 652A8 9 0 1 0 390 652M398 640V620M408 645L425 628M408 655L428 658M392 665L385 680M388 650L368 640',
      'M645 520Q642 510 655 500L745 462Q758 460 762 475L773 520Q755 528 758 550Q740 565 743 580L712 595L698 622L690 605L675 608Q668 605 665 598ZM682 520L728 500Q738 505 730 515L688 532Q678 530 682 520ZM690 545L735 525Q745 530 738 540L695 557Q685 553 690 545ZM755 570L785 558L775 542L802 545L790 580L782 568L758 578Z',
      'M665 740L728 655Q732 660 728 675L790 672L812 648Q820 660 810 685L828 700Q825 712 790 708Q760 770 715 765Q665 765 665 740ZM692 695Q720 715 718 765M690 724h5M728 722Q735 700 760 710Q755 725 738 715',
      'M522 675Q522 650 560 645Q575 655 570 680L548 685M522 675L530 750M548 685L555 748M540 655L545 682M525 685H548M528 705L550 700M528 725L552 722M510 820L498 770Q500 755 590 745Q600 750 602 795M430 920C430 850 530 795 610 796C680 800 705 860 690 920C670 985 600 985 545 987C480 985 435 960 430 920ZM526 889A53 66 0 1 0 632 889A53 66 0 1 0 526 889M550 889A28 34 0 1 0 606 889A28 34 0 1 0 550 889M570 841h4M597 848h4M614 870h4M614 908h4M590 935h4M561 930h4M541 905h4M545 866h4M400 925Q385 880 400 866Q420 870 415 915L430 920M400 940Q395 925 415 920M402 950L428 942M415 955Q405 995 420 1000Q440 995 430 965',
      'M0 915Q40 870 70 868Q100 875 115 895M48 930Q65 895 105 898Q150 895 148 935Q145 950 110 948Q75 950 82 985Q90 1020 150 1030Q175 1040 165 1080Q155 1090 95 1080L25 1083L20 1075M173 890Q185 845 240 843Q260 845 270 855Q330 900 340 965M340 965Q370 940 374 980Q370 1020 320 1055Q290 1050 292 1030M173 890Q215 855 275 913M155 930Q160 885 185 880M155 930Q165 950 185 935Q200 915 225 925Q250 950 245 985Q235 1020 190 1045Q175 1060 195 1080Q215 1085 240 1060Q290 1030 296 1020M165 1015L143 990Q140 970 155 970Q163 978 165 980Q180 965 187 980Q185 1005 165 1015Z',
      'M918 860C920 810 945 798 970 798C1005 805 1020 840 1018 873ZM878 835Q885 790 910 792L932 800Q910 815 912 840ZM1010 805Q1040 795 1055 830L1060 853L1030 850Q1028 820 1010 805ZM903 762A15 21 0 1 0 933 762A15 21 0 1 0 903 762M951 753A22 33 0 1 0 995 753A22 33 0 1 0 951 753M1015 772A14 21 0 1 0 1044 772A14 21 0 1 0 1015 772',
      'M650 1015Q652 1000 662 1002L745 1015Q755 1018 755 1035L778 1035L773 1090L748 1080Q742 1098 735 1098L655 1085Q645 1080 646 1070ZM668 1032A6 8 0 1 0 680 1032A6 8 0 1 0 668 1032',
      'M970 265L950 150C940 80 990 15 1050 18C1110 25 1150 110 1180 250Q1190 280 1165 300C1135 330 1130 420 1155 450Q1180 470 1215 465Q1240 450 1232 443Q1200 440 1188 420Q1180 370 1220 340Q1250 310 1252 260Q1250 150 1175 155M1155 450Q1145 470 1150 475Q1210 495 1260 490Q1340 470 1335 380Q1330 300 1322 230Q1310 215 1295 250Q1280 300 1298 330Q1290 400 1250 390Q1220 370 1208 355M1135 95Q1160 80 1180 75Q1220 55 1255 10Q1270 15 1250 60L1200 110Q1170 150 1170 200',
      'M970 265Q985 380 950 380Q920 440 870 440Q820 430 835 380Q860 340 885 325Q910 300 905 265L893 165Q895 150 910 175Q930 210 930 225Q920 260 925 285Q950 320 970 270M900 215Q890 205 885 230Q880 270 850 290Q780 340 778 400Q775 500 855 528Q890 540 965 520M1002 395Q960 430 965 520Q965 560 1010 580Q1085 580 1088 620Q1090 665 1060 675Q1020 690 1028 700Q1050 705 1085 690Q1130 660 1127 620Q1125 570 1090 550Q1050 500 1068 430',
      'M855 528Q820 550 822 600Q825 650 870 648Q920 625 922 650Q920 680 880 690Q865 705 885 705Q940 705 953 660Q965 600 905 585Q895 570 925 575Q975 600 1018 580M1145 470Q1130 530 1150 565Q1170 590 1195 585Q1215 575 1230 555Q1260 515 1270 530Q1270 560 1225 620Q1190 655 1127 640M800 325Q815 340 812 350Q800 360 790 350M780 412Q800 415 803 440Q800 455 788 458M815 490Q840 475 852 520M885 525Q905 480 928 525M902 385Q920 340 942 395M882 315Q910 335 892 355M930 570Q960 535 967 585M930 605Q950 610 945 630M928 680Q935 640 945 670M1060 475Q1030 500 1050 520Q1058 530 1068 520M1090 555Q1090 595 1120 590M1095 680Q1095 640 1120 650M1148 565Q1150 600 1175 585M1200 582Q1215 610 1225 560M1230 485Q1240 430 1275 490M1298 460Q1290 420 1325 430M1335 350Q1300 340 1320 385L1335 390M1320 280Q1300 290 1318 315M1245 270Q1215 275 1220 310L1235 320M1210 330Q1180 320 1185 360M1185 390Q1165 400 1180 420M1195 105Q1165 90 1172 130M1225 75Q1205 55 1207 85',
      'M965 178L1118 125L1115 140Q1125 200 1090 218Q1060 215 1050 180L1042 182Q1045 240 1005 242Q975 235 965 178ZM988 195Q988 180 1025 178Q1035 180 1030 210Q1020 235 1005 235Q988 225 988 195ZM1062 165Q1065 155 1100 148Q1110 155 1108 185Q1095 210 1080 205Q1060 195 1062 165Z',
      'M1264 118A53 66 0 1 0 1370 118A53 66 0 1 0 1264 118M1320 52Q1320 100 1365 150M1270 105Q1320 130 1345 178M1290 70Q1330 110 1365 90M1355 70Q1300 110 1282 160M1368 100Q1330 120 1305 182',
      'M1410 160L1540 110Q1565 110 1565 140L1400 310Q1355 280 1355 240Q1420 240 1432 190Q1410 175 1410 160ZM1380 290L1525 180M1520 120Q1520 145 1525 165L1530 190M1432 190L1435 160M1455 155h8M1480 150h8M1505 140h8M1412 50Q1412 35 1425 40L1455 60L1475 0M1412 50L1470 85L1495 0M1495 50L1520 65L1540 0M1495 50L1500 0',
      'M862 0L885 95Q895 100 915 65L895 30Q895 20 932 55L955 20Q955 10 935 0M1078 960Q1055 920 1055 875Q1080 880 1090 905Q1105 870 1122 865Q1125 900 1125 915L1155 912Q1150 965 1110 970Q1090 975 1078 960ZM1078 960Q1070 990 1085 1035L1108 1078M1085 1035Q1050 1040 1048 1080L1055 1110M1085 1035Q1085 1005 1110 998Q1155 1005 1152 1060L1148 1110',
      'M865 1110Q850 1060 920 1030Q980 1015 1000 1050Q1010 1080 1005 1110M885 1110Q910 1060 960 1060Q985 1080 975 1110M920 1032Q915 990 928 988Q940 1000 938 1028M990 1035Q1025 995 1038 1002Q1050 1040 1003 1060M868 1085Q830 1065 817 1082Q820 1105 858 1105M915 1040L925 1070M965 1030V1060M1002 1082H980M870 1080L890 1100M440 1110Q440 1050 455 1048Q470 1055 472 1110M485 1110Q485 1055 505 1055Q520 1070 515 1110M240 1110Q260 1070 280 1110',
      'M1258 1110Q1250 1060 1256 1015L1278 1010L1275 985L1290 975V940Q1300 928 1325 930Q1360 935 1370 970L1392 1110M1325 930Q1370 930 1385 975L1408 1110M1288 1035L1305 1042L1288 1052M1348 1020L1332 1032L1350 1038M1305 1085L1350 1078M1315 1085L1320 1110M1345 1080V1110M1448 1110L1448 1060Q1455 1045 1475 1060Q1510 1030 1568 1025'
    ],
    words: []
  },
  {
    origin: [650, 766],
    unit: [0.4146, 0.3333],
    dots: '697,366,4 1282,213,7 1316,276,4 1344,300,3.5 1373,258,4.5 1437,253,4 1513,248,5 1494,198,3 1510,158,3 1110,345,4 771,466,3 761,505,4 1055,478,6 1038,545,4 1317,525,4 840,648,4.5 842,699,4 1033,762,5 1015,679,3 853,793,7 908,792,4 930,824,4 591,640,4 581,682,6 1319,779,5.5 1226,821,3 1264,830,4.5 1305,833,6 1205,866,5 1334,896,4 1450,754,3.5 1488,740,4 1467,800,4.5 1450,854,4 1526,863,5 1526,706,4.5 518,928,6 569,932,8 627,913,4.5 629,960,2.5 538,996,2.5 592,990,4 772,880,4 784,932,7 753,989,4.5 1007,1047,3 1385,948,4 1469,1020,5.5 1488,1063,3.5',
    items: [
      ['sparkle', 1225, 130, 1.05], ['sparkle', 1243, 320, 0.8], ['sparkle', 798, 592, 0.95, 10], ['sparkle', 1068, 638, 0.95], ['star', 703, 925, 1],
      ['star', 1393, 1060, 1.2], ['star', 1560, 795, 1.1], ['bolt', 1390, 815, 1.1], ['bolt', 1072, 385, 0.9, -20], ['note', 1465, 920, 0.9, 10]
    ],
    lines: [
      'M415 515Q415 500 430 495L735 422L723 470L735 540Q735 560 720 565L455 630Q435 632 430 615ZM455 530Q455 518 468 520Q480 525 480 565Q475 575 463 568ZM452 560Q465 595 490 558M475 585L477 600M515 520L550 538L518 565ZM570 528L697 496M667 548L675 555L690 525M683 552L703 520',
      'M935 430L830 375Q820 380 828 395L838 412Q805 405 800 430Q800 445 830 450L802 475Q805 495 830 488L810 512Q815 530 845 510L832 540Q835 548 845 545L925 500',
      'M930 435L938 400Q945 390 985 395Q998 400 998 440M908 460Q908 435 925 438L1005 450Q1015 455 1014 465Q1012 478 1000 478L920 472Q908 470 908 460M935 440L932 470M958 445V473M978 448V475M928 475L885 710Q885 725 900 727L965 733Q975 732 980 720L996 478M920 510Q960 525 990 515M908 580Q940 595 987 585M895 655Q940 670 982 665M937 562Q935 540 950 538Q965 540 964 568ZM930 640Q928 615 942 615Q955 620 955 643Z',
      'M1098 485L1125 425L1215 420L1258 460L1278 580L1228 626L1125 620Q1118 618 1115 605ZM1098 485H1208L1228 626M1125 425L1128 408L1208 400Q1215 402 1217 425L1208 485L1258 460M1155 520Q1175 560 1165 573Q1150 585 1143 565Q1140 545 1155 520ZM1228 525L1255 505V520L1228 542Z',
      'M1085 740C1080 700 1110 685 1140 680Q1160 660 1175 670Q1190 655 1220 660Q1290 640 1318 670Q1330 720 1290 745L1150 790Q1100 795 1085 740ZM1142 740Q1140 700 1155 690M1142 740Q1155 720 1160 690Q1165 670 1178 672M1190 730Q1190 690 1205 665M1190 730Q1205 700 1218 660M1235 712Q1230 680 1245 655M1235 712Q1250 690 1255 655',
      'M1360 570L1358 490C1360 430 1390 405 1435 405C1480 410 1500 450 1515 520Q1518 540 1500 550L1385 588Q1365 590 1360 570ZM1365 585L1378 680Q1390 705 1420 698L1520 665Q1545 655 1548 620L1540 555Q1530 530 1515 535M1410 570Q1410 558 1420 558Q1428 565 1425 590Q1418 602 1410 590ZM1478 545Q1480 535 1488 537Q1495 550 1493 570Q1485 578 1478 565ZM1365 585Q1340 580 1340 615Q1340 650 1360 670L1378 672M1515 530Q1540 510 1550 540L1560 590Q1560 605 1548 605',
      'M1290 395Q1290 380 1305 370L1490 298Q1510 295 1515 315L1522 360Q1525 390 1500 395L1490 400M1290 395L1300 445Q1305 465 1330 460L1358 450M1318 370L1335 455M1328 362L1350 450M1460 310L1475 400M1475 303L1490 400M1380 410Q1380 370 1410 365Q1435 370 1438 405M1395 408Q1395 385 1410 385Q1422 390 1424 402',
      'M620 715C620 650 670 615 710 620C750 622 785 660 783 695ZM620 715Q605 730 605 740Q610 755 625 740Q640 765 655 745Q670 760 690 740Q710 740 730 735Q750 715 765 720Q780 705 805 710Q805 690 785 695M605 785Q610 768 640 768L720 760Q760 735 810 725Q820 735 815 745L740 775Q700 790 610 785M740 775L820 755Q830 765 820 775L735 800Q700 790 615 800M618 795Q610 815 625 820Q640 810 650 825Q665 800 680 820Q700 795 720 810Q745 795 755 810Q775 790 790 795Q810 795 810 780M632 825Q632 855 660 853Q790 850 808 795M652 665Q650 655 658 655Q660 665 652 670M700 650Q698 642 705 640Q710 648 702 655M735 655Q733 645 742 645Q746 655 735 658M685 680Q680 672 688 670Q692 680 685 685M718 675Q715 665 728 672Z',
      'M816 904A53 66 0 1 0 922 904A53 66 0 1 0 816 904M858 868L892 898Q895 910 882 905L888 940Q880 950 875 938L868 905L858 922Q845 925 850 910ZM1005 855L945 955Q945 965 955 962L995 948L1025 985Q1032 980 1028 965ZM1050 810Q1130 805 1160 850Q1165 900 1130 925Q1100 960 1068 945Q1050 900 1050 810ZM1075 845L1155 948M1093 870L1098 850M1110 895L1118 870M1082 875L1105 885M1098 902L1125 908',
      'M1152 970L1290 905Q1300 905 1305 920L1333 1025Q1330 1045 1320 1048L1218 1083Q1205 1085 1200 1070L1178 1000ZM1215 990L1275 960Q1290 962 1282 975L1222 1002Q1208 1000 1215 990ZM1225 1020L1275 995Q1290 1000 1280 1010L1232 1033Q1220 1030 1225 1020ZM802 985Q805 975 815 980Q830 985 832 1005Q805 1005 802 985ZM895 1013Q915 995 935 1010Q935 1025 918 1022ZM1055 1090Q1045 1050 1055 1035L1065 1025L1063 1008L1082 1000L1090 1018Q1115 1040 1118 1110M1508 1110Q1510 1060 1545 990Q1530 975 1510 985M1568 950Q1520 940 1510 985',
      'M1305 155L1355 80Q1380 35 1420 36Q1465 45 1462 85Q1455 130 1400 140Q1330 155 1308 168Q1298 165 1305 155ZM1355 102L1400 77Q1412 80 1405 90L1365 110Q1352 112 1355 102ZM1340 150Q1350 205 1385 210Q1435 200 1437 120M1370 145Q1375 165 1390 167Q1405 160 1405 138M1350 85Q1375 60 1390 0M1405 30Q1430 20 1440 0M1430 40Q1460 35 1490 0M1460 115L1568 55M1568 5Q1520 20 1505 95M1115 0L1135 18L1165 35L1295 8L1297 0M1165 35L1175 0M1190 210L1200 195L1222 255L1180 272M1188 250L1198 225L1207 245ZM1195 295L1190 335'
    ],
    words: []
  },
  {
    origin: [0, 1096],
    unit: [0.4146, 0.3333],
    dots: '129,164,4.5 290,149,4 348,158,5 448,117,3.5 486,163,4.5 459,195,4 342,217,7 373,260,4.5 290,276,4.5 50,356,7 161,399,3.5 166,465,5 361,421,5 25,589,7 83,592,3.5 128,642,6 67,668,5 20,712,4.5 186,838,4.5 737,260,5.5 722,323,7 762,352,4 691,366,4 696,414,4 790,525,5 1041,91,4 1068,114,3 1065,363,4.5 1046,429,6 1000,454,4.5 1028,515,3.5 1191,392,5.5 1243,427,7 1231,471,3.5 1260,503,4 1209,517,4 1264,60,4 1243,109,5 1427,195,5.5 1394,265,3.5 1434,312,4 1483,158,3.5 1467,554,6 1478,623,4 1530,692,4 1548,745,7 1296,711,3.5 955,652,3.5 985,679,3.5 983,720,4.5 1132,838,3 1357,830,3.5 1450,866,6 1508,856,4 1063,880,7 248,884,6 302,890,5 621,204,1.5 650,180,2 714,647,3 739,657,3',
    items: [
      ['star', 88, 482, 1, 10], ['star', 207, 693, 1, 10], ['star', 740, 165, 0.9], ['star', 508, 95, 1], ['star', 1505, 275, 1.5, 5], ['sparkle', 138, 270, 0.7],
      ['sparkle', 977, 570, 0.75], ['sparkle', 1273, 575, 0.7], ['drop', 204, 137, 0.9], ['drop', 202, 332, 1.05], ['drop', 264, 362, 1.1, -10],
      ['drop', 218, 427, 0.7, 8], ['heart', 354, 333, 1.2], ['heart', 994, 818, 1.2], ['bell', 205, 555, 0.95], ['cloud', 103, 793, 0.97],
      ['pencil', 745, 465, 0.95, 48], ['emoji', 1372, 457, 1], ['pin', 1122, 660, 0.75], ['person', 1275, 262, 0.97], ['plus', 1360, 182, 1, -12]
    ],
    lines: [
      'M160 78L185 255Q190 260 255 243L235 78M185 245Q215 230 255 235',
      'M397 130Q405 100 412 108Q400 215 445 245Q465 255 505 255M397 130Q385 215 430 270Q450 290 432 320Q420 350 440 430Q450 445 500 438Q530 425 518 400Q510 390 490 398Q475 400 478 410Q470 420 495 430M470 405V365Q475 355 492 375Q530 385 555 380M492 375V395M557 360Q560 425 590 435Q640 430 635 405Q615 395 620 385Q650 385 648 405Q650 420 635 420M595 362V395Q600 405 625 400M635 280Q640 330 620 355V390M520 192Q535 150 580 140Q640 130 655 180Q690 220 675 260Q650 285 572 292M502 232Q505 185 548 185Q580 200 577 290Q565 305 545 300Q505 285 502 232ZM585 135Q600 120 640 155M645 215Q650 205 655 212Q662 205 666 215Q665 225 656 225ZM656 225V235L645 240M656 235L668 238',
      'M795 200Q790 188 805 182L985 124Q1000 122 1003 135L1031 285Q1030 305 1018 310L840 365Q825 368 820 350ZM815 208L980 150L1010 285L842 340ZM940 195A17 21 0 1 0 976 195A17 21 0 1 0 940 195M840 315Q870 250 895 242Q915 248 980 290M938 262Q950 238 965 240Q985 245 1000 250M885 155L928 105Q940 95 950 105L965 128M800 235Q780 260 788 275L815 315M848 368L875 402Q890 405 895 395L950 335M1012 200Q1040 230 1035 245L1028 255',
      'M260 790L275 500Q280 468 310 467L610 505Q640 515 642 545L622 838M278 760L295 520Q295 508 310 508L610 545Q620 548 619 560L600 795Q598 803 588 802L290 768Q278 765 278 760ZM208 790L392 815Q395 830 400 832L500 843Q508 840 508 828L680 850Q678 880 670 888M208 790Q210 830 235 843L605 888M380 728L392 685C375 620 410 565 457 563C510 568 530 620 525 660C515 720 460 760 415 730ZM403 690C385 640 420 583 457 583C500 588 512 630 510 665C500 720 450 735 420 710L400 715ZM427 640Q425 612 445 618L443 640Q445 655 465 668L478 668Q490 675 480 690Q460 700 440 675Q428 655 427 640Z',
      'M768 752L700 745Q665 715 680 650Q700 590 760 592Q870 600 892 670Q900 740 885 888M768 752Q760 795 740 795Q690 785 685 820Q690 840 735 843L718 888M705 700Q720 715 748 712Q740 735 725 730Q708 720 705 700ZM818 675Q830 665 842 690M856 838Q810 805 785 808Q760 825 768 845Q780 860 810 852M797 598L825 570Q832 580 832 610L860 600Q868 610 865 630L893 622Q898 640 890 655L912 658Q908 675 900 682L915 705Q910 715 895 715L916 745L895 752L912 778L892 785L908 805L890 815L905 840L888 848L902 868L890 880',
      'M910 468Q880 440 855 445Q820 460 835 520Q850 530 855 555Q880 580 910 568Q945 540 938 495Q930 475 910 475ZM910 475Q905 450 925 437Q932 450 912 478M1100 390L1130 432L1175 440Q1178 445 1170 450L1095 523Q1090 520 1092 510Z',
      'M1120 140V78M1135 78L1158 165L1168 85Q1180 60 1196 75L1195 200Q1215 250 1195 295Q1160 335 1120 318Q1085 280 1085 215Q1060 190 1070 165Q1090 155 1095 215M1100 145Q1115 135 1125 145Q1135 190 1122 190L1100 210Q1110 190 1100 150M1118 205Q1140 180 1170 190Q1195 215 1193 230M1118 205Q1112 225 1130 228L1158 222Q1155 250 1165 262',
      'M1005 645L1052 598L1128 568L1175 530Q1185 525 1188 540L1237 690Q1238 700 1230 705L1190 735L1135 790L1078 800ZM1055 600L1130 780M1130 572L1195 735M1060 765L1165 690L1208 610M1068 778L1170 690L1212 625M1170 680L1210 720M1208 628L1180 672L1215 715',
      'M1180 888Q1165 860 1170 840Q1180 820 1182 815Q1190 765 1240 759Q1290 768 1298 820Q1325 830 1318 888M1198 833Q1200 780 1240 778Q1280 785 1282 822ZM1185 864A11 14 0 1 0 1207 864A11 14 0 1 0 1185 864M1279 851A11 14 0 1 0 1301 851A11 14 0 1 0 1279 851',
      'M1315 655Q1308 640 1325 632L1362 622L1358 608Q1370 595 1378 605L1380 620L1425 612Q1435 618 1430 632L1392 645Q1395 690 1395 720L1418 740Q1420 755 1412 755L1385 740L1355 780Q1345 785 1345 770L1372 725Q1345 700 1350 685Q1365 680 1380 710Q1378 680 1375 650L1325 665Z',
      'M1325 25Q1326 12 1336 12L1420 25Q1430 28 1432 48L1455 45L1450 100L1430 90Q1425 110 1412 110L1335 98Q1323 95 1324 85ZM1347 42A6 8 0 1 0 1359 42A6 8 0 1 0 1347 42',
      'M0 150Q45 120 50 100Q50 85 25 82M0 185L75 120Q85 130 75 155L77 165M0 205L30 185L35 195L60 175L75 165V265Q60 295 0 308M0 408L22 405L8 440L14 520Q10 530 0 530M0 765Q12 770 10 800Q5 820 0 820M310 80Q320 100 330 95L370 80M640 78Q665 110 690 118Q705 110 705 85L845 95Q850 85 845 78M865 78Q880 100 908 80M1120 78V70',
      'M1497 390Q1497 375 1512 374L1675 374Q1692 378 1692 400V530Q1690 560 1670 566H1575L1535 615L1530 570H1515Q1497 565 1497 545Z'
    ],
    words: [['Hi', 1525, 508, 40, 0], ['A', 1420, 820, 52, -8]]
  },
  {
    origin: [650, 1096],
    unit: [0.3333, 0.3333],
    dots: '423,25,4 377,51,3.5 404,112,6.5 122,273,4.5 38,307,4 142,333,6 77,337,4 508,308,4 347,431,4 396,434,4.5 202,508,4 226,560,4.5 271,615,8 268,714,3.5 236,780,6 112,810,3.5 400,812,5.5 931,170,5 888,190,3 885,246,4 950,242,8 965,295,4 933,354,4 973,388,3.5 928,560,4.5 939,605,5.5 982,594,4.5 1023,583,3.5 1067,615,6 990,667,5.5 756,654,4.5 817,637,7 903,794,4 891,850,5.5 936,862,3.5 611,793,10 720,831,10 751,747,4 789,733,4 766,786,4 803,772,4 310,268,2 603,430,1 614,432,1 735,405,1 745,395,1',
    items: [
      ['star', 965, 75, 1, 10], ['star', 1035, 342, 1, 10], ['sparkle', 282, 478, 0.95, 15], ['sparkle', 902, 700, 0.75], ['drop', 503, 245, 0.7, 20],
      ['drop', 642, 243, 0.8, -10], ['drop', 712, 258, 0.65, -10], ['mic', 1048, 785, 1.1]
    ],
    lines: [
      'M0 75Q50 20 110 40Q155 75 140 130Q120 180 75 200Q40 212 0 208M0 115Q40 75 85 70Q115 85 100 125Q70 165 0 162M38 40Q30 0 42 0Q60 5 58 35M125 45Q160 5 182 12Q195 40 145 75M130 122Q175 130 175 148Q160 160 122 150M28 165Q20 240 28 252Q45 255 48 240L55 205M35 45L40 75M92 42L88 70M142 92L105 97M135 140L98 130M92 187L68 155M165 35h2M163 25h2',
      'M230 0V45M238 0Q240 60 270 88M235 42Q240 8 270 8Q325 15 325 75Q325 130 300 140Q250 160 215 130Q190 90 200 60Q215 40 235 42Z',
      'M455 28Q450 100 470 165Q475 178 495 175L595 155Q625 145 622 125L595 0M455 22L482 12V0M620 140Q650 130 648 110L612 0M540 170L555 215Q565 230 580 222Q588 215 570 162M493 42L512 52L495 62M565 30L550 40L570 47M515 98H535Q560 95 570 92M528 98Q530 130 550 128Q565 120 562 95M545 96L548 110',
      'M690 65Q690 55 700 60Q730 80 755 55Q850 15 885 75Q890 120 850 135Q820 150 835 200Q830 260 805 264Q780 260 755 220Q740 200 690 195Q660 180 690 150Q705 120 690 85Z',
      'M165 240Q162 225 175 215L395 152Q420 148 428 165L468 320Q470 345 440 360L448 405Q440 412 375 378L240 415Q215 418 205 395ZM221 287A69 69 0 1 0 359 287A69 69 0 1 0 221 287M289 269A20 20 0 1 0 329 269A20 20 0 1 0 289 269M246 292Q255 268 274 282M258 320Q300 310 336 295Q335 330 305 342Q270 345 258 320M280 318L285 332M290 315L300 338M308 308L315 330M383 336L400 347L415 310M412 340L434 305',
      'M1058 30Q1065 22 1072 35L1092 65Q1120 60 1115 85Q1165 75 1165 105Q1168 125 1158 128Q1200 110 1200 140L1198 160Q1200 220 1198 265Q1190 280 1115 307Q1100 310 1090 300L1038 230Q1000 220 1003 190Q1010 170 1025 170Q1005 150 1025 135Q1015 110 1040 92Q1038 75 1058 30ZM1040 90Q1080 90 1110 75M1025 135Q1080 120 1120 85M1025 170Q1100 160 1158 128M1040 225L1060 218L1068 222L1080 210L1092 213L1105 205L1112 207L1125 192L1135 195L1148 180L1160 185L1175 172L1182 175L1195 160',
      'M955 435Q955 420 970 417L1132 404L1115 430L1122 515Q1120 530 1105 533L980 544Q965 542 965 525ZM990 455L1080 445Q1092 450 1085 458L995 467Q982 465 990 455ZM992 487L1060 479Q1072 485 1065 493L995 500Q985 495 992 487Z',
      'M605 355Q640 330 710 328Q755 340 770 385Q780 430 740 465Q700 490 640 490Q580 470 575 400Q555 380 557 345Q580 340 605 355M705 325Q720 300 740 300Q765 320 758 350M610 392A17 17 0 1 0 644 392A17 17 0 1 0 610 392M688 374A17 17 0 1 0 722 374A17 17 0 1 0 688 374M660 402Q670 390 682 398Q685 410 672 412ZM645 415Q655 435 672 420Q690 435 702 402M624 385h4M705 368h4',
      'M648 490Q660 520 685 535Q695 560 690 570Q665 575 672 600Q680 610 700 605Q695 580 710 572Q725 570 722 575L713 542M700 605Q750 610 755 580Q760 550 752 522M758 540Q800 540 830 502Q850 520 845 545Q820 540 825 560Q835 575 860 568Q890 560 885 500Q885 460 865 430Q870 330 845 318Q830 320 840 335Q870 380 835 410Q800 410 775 418M815 525L820 540Q790 550 800 565Q810 575 830 572',
      'M350 690Q350 660 320 620Q310 560 325 520Q340 510 350 530Q360 540 362 575Q380 610 400 605Q420 590 420 570Q405 530 355 500Q345 485 375 487Q430 490 460 540Q475 560 473 585M460 540Q470 520 468 470Q475 435 490 438Q505 460 500 550L494 573M505 510Q530 465 550 465Q560 480 550 500Q530 530 530 545L505 593M527 553L570 525Q590 530 585 545Q570 570 525 600Q470 650 440 697M328 705Q330 688 350 690L440 697Q455 700 455 715Q455 750 440 757L350 750Q325 745 325 730Z',
      'M130 690Q85 650 83 625Q90 590 128 605Q160 580 177 605Q178 635 130 690Q170 640 215 645Q230 660 215 680Q230 700 210 715Q165 720 130 690Q170 715 165 740Q190 735 185 750Q170 770 150 772Q130 770 135 690M130 690Q90 640 60 660Q52 675 65 682Q45 690 55 705Q80 720 130 690ZM125 702L55 765Q55 775 65 770L130 708',
      'M455 835Q455 820 475 790L550 670Q580 630 620 632Q660 635 690 675Q740 700 790 687Q850 690 850 740L832 888M455 835Q460 870 520 880Q560 875 600 840Q650 855 705 888M565 888Q600 855 645 888M612 668Q635 670 630 695L655 705Q655 730 625 728L610 750Q585 755 587 725L568 710Q570 690 598 692ZM675 772L700 718L710 723L687 776Z',
      'M98 888L130 865L290 822Q350 815 372 888M290 820L292 810L310 808L315 820M13 830Q15 822 25 828L58 852Q55 862 45 858L18 840M0 868H40Q48 875 40 882L0 878M250 865L270 858M278 888L285 862M302 852L325 845M330 850L340 875M308 885L328 880M300 860L305 880M168 885L185 880'
    ],
    words: []
  }
];

const Patch = ({ origin, unit, dots, items, lines, words }) => (
  <g transform={`translate(${origin[0]} ${origin[1]})`}>
    {dots.split(' ').map(dot => {
      const [x, y, r] = dot.split(',').map(Number);
      return <circle key={dot} cx={x * unit[0]} cy={y * unit[1]} r={r} />;
    })}
    {items.map(([name, x, y, size, turn = 0], index) => (
      <g key={index} transform={`translate(${x * unit[0]} ${y * unit[1]}) rotate(${turn}) scale(${size})`}>
        {stamps[name]}
      </g>
    ))}
    {lines.map((d, index) => (
      <path key={index} transform={`scale(${unit[0]} ${unit[1]})`} vectorEffect="non-scaling-stroke" d={d} />
    ))}
    {words.map(([word, x, y, size, turn], index) => (
      <text
        key={index}
        transform={`translate(${x * unit[0]} ${y * unit[1]}) rotate(${turn})`}
        fontFamily="Open Sans, sans-serif"
        fontWeight="700"
        fontSize={size}
      >
        {word}
      </text>
    ))}
  </g>
);

const Doodles = () => (
  <Wallpaper aria-hidden="true">
    <defs>
      <g id="tile">
        {patches.map((patch, index) => <Patch key={index} {...patch} />)}
      </g>
    </defs>
    {[-1, 0, 1, 2].map(column => (
      <use key={column} href="#tile" x={column * TILE_WIDTH} />
    ))}
  </Wallpaper>
);

const Message = ({ mine, tail, message }) => {
  const { quote, text, time, minWidth } = message;

  return (
    <Bubble $mine={mine} $tail={tail} $minWidth={minWidth}>
      {tail && (
        <Tail $mine={mine} viewBox="0 0 13 18" aria-hidden="true">
          <path stroke="none" d="M0 0H11Q14 1 12 4L0 18Z" />
          <path d="M0 0.500H11" />
        </Tail>
      )}
      {quote && (
        <Quote $mine={mine}>
          <QuoteName $mine={mine}>{quote.name}</QuoteName>
          <QuoteText $mine={mine}>{quote.text}</QuoteText>
        </Quote>
      )}
      {text && (
        <Body>
          <Text $mine={mine}>{text}</Text>
          <Meta $mine={mine}>
            <time>{time}</time>
            {mine && (
              <Ticks viewBox="0 0 20 14" role="img" aria-label="Read">
                <path d="M1 8L5 12L13 1M9 10L11 12L19 1" />
              </Ticks>
            )}
          </Meta>
        </Body>
      )}
    </Bubble>
  );
};

const App = () => {
  const scroller = useRef(null);

  // open a little way down, with the first message half out of view
  useLayoutEffect(() => {
    scroller.current.scrollTop = 31;
  }, []);

  return (
    <Page>
      <GlobalStyle />
      <TopEdge />
      <Chat>
        <Doodles />
        <Scroller ref={scroller}>
          <Messages>
            {groups.map((group, index) => (
              <Group key={index} $mine={group.mine}>
                {group.messages.map((message, i) => (
                  <Message
                    key={i}
                    mine={group.mine}
                    tail={i === 0 && !message.follows}
                    message={message}
                  />
                ))}
              </Group>
            ))}
          </Messages>
        </Scroller>
        <JumpButton type="button" aria-label="Scroll to latest message">
          <Arrow viewBox="0 0 32 34" aria-hidden="true">
            <path d="M16 1V32M1 17L16 32L31 17" />
          </Arrow>
        </JumpButton>
      </Chat>
      <BottomEdge />
    </Page>
  );
};

export default App;
